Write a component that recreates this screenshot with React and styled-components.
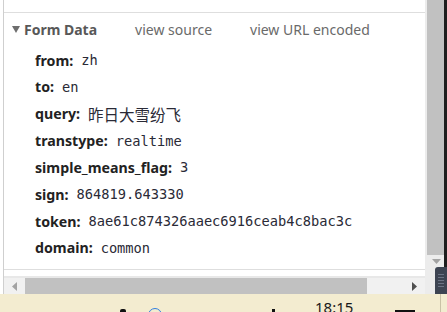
import React from "react";
import styled, { createGlobalStyle } from "styled-components";

const Global = createGlobalStyle`
  html, body { margin: 0; padding: 0; background: #fff; }
  body { width: 447px; height: 312px; overflow: hidden; }
  #root { width: 447px; height: 312px; }
`;

const Page = styled.div`
  display: flex;
  flex-direction: column;
  width: 447px;
  height: 312px;
  overflow: hidden;
`;

const Main = styled.div`
  display: flex;
  height: 294px;
`;

const Panel = styled.div`
  flex: 1;
  display: flex;
  flex-direction: column;
  margin-left: 3px;
  border-left: 1px solid #cfcfcf;
`;

const TopStrip = styled.div`
  height: 12px;
  border-bottom: 1px solid #dedede;
`;

const Section = styled.div`
  flex: 1;
  display: flex;
  flex-direction: column;
`;

const Header = styled.div`
  height: 33.6px;
  display: flex;
  align-items: center;
  padding-left: 8px;
  font-family: "Noto Sans", sans-serif;
  font-size: 14px;
`;

const Triangle = styled.span`
  width: 0;
  height: 0;
  border-left: 4px solid transparent;
  border-right: 4px solid transparent;
  border-top: 7px solid #6e6e6e;
  margin-right: 4px;
`;

const Title = styled.span`
  font-weight: 700;
  color: #585858;
  margin-right: 38px;
`;

const Link = styled.span`
  color: #6a6a6a;
  margin-right: 38px;
`;

const Rows = styled.div`
  display: flex;
  flex-direction: column;
  padding-left: 31px;
`;

const Row = styled.div`
  height: 26.85px;
  display: flex;
  align-items: center;
  white-space: nowrap;
`;

const Label = styled.span`
  font-family: "Noto Sans", sans-serif;
  font-weight: 700;
  font-size: 14.2px;
  color: #222;
  margin-right: 8px;
`;

const Value = styled.span`
  font-family: "DejaVu Sans Mono", "Noto Sans CJK SC", monospace;
  font-size: ${(p) => (p.$cjk ? "15.5px" : "13.7px")};
  color: #2a2a36;
`;

const BottomLine = styled.div`
  height: 6px;
  border-top: 1px solid #dedede;
`;

const HScroll = styled.div`
  height: 18px;
  display: flex;
  align-items: stretch;
  background: #f1f1f1;
  border-top: 2px solid #e8e8e8;
  box-sizing: border-box;
`;

const ArrowBox = styled.div`
  width: ${(p) => p.$w}px;
  display: flex;
  align-items: center;
  justify-content: center;
`;

const HThumb = styled.div`
  width: 342px;
  background: #c1c1c1;
`;

const HTrack = styled.div`
  flex: 1;
`;

const VScroll = styled.div`
  width: 22px;
  display: flex;
  flex-direction: column;
  background: #ececec;
  border-right: 3px solid #1e1e1e;
  box-sizing: border-box;
`;

const VThumb = styled.div`
  height: 255px;
  margin-left: 2px;
  background: #c1c1c1;
`;

const VArrow = styled.div`
  height: 12px;
  display: flex;
  align-items: center;
  justify-content: flex-end;
  padding-right: 3px;
`;

const Grip = styled.div`
  flex: 1;
  margin-left: 10px;
  margin-right: -3px;
  background: #3d4452;
  border-radius: 3px 0 0 0;
  display: flex;
  flex-direction: column;
  justify-content: center;
  gap: 2px;
  padding: 0 3px;
`;

const GripLine = styled.div`
  height: 1px;
  background: #6b7384;
`;

const Taskbar = styled.div`
  height: 18px;
  background: #f3ecd0;
  display: flex;
  align-items: flex-start;
  overflow: hidden;
`;

const TrayBlob = styled.div`
  margin-left: ${(p) => p.$ml}px;
  margin-top: ${(p) => p.$mt}px;
  width: ${(p) => p.$w}px;
  height: ${(p) => p.$h}px;
  background: ${(p) => p.$c || "#111"};
  border-radius: ${(p) => p.$r || 0};
  flex-shrink: 0;
`;

const Ring = styled.div`
  margin-left: ${(p) => p.$ml}px;
  margin-top: 14px;
  width: 14px;
  height: 14px;
  border: 1.5px solid #2f7fe0;
  border-radius: 50%;
  box-sizing: border-box;
  flex-shrink: 0;
`;

const Clock = styled.div`
  margin-left: ${(p) => p.$ml}px;
  margin-top: 6px;
  font-family: "Noto Sans", sans-serif;
  font-size: 15px;
  line-height: 15px;
  color: #1a1a1a;
  flex-shrink: 0;
`;

const Divider = styled.div`
  margin-left: ${(p) => p.$ml}px;
  width: 1px;
  height: 18px;
  background: #c9c2a6;
  flex-shrink: 0;
`;

const fields = [
  ["from", "zh"],
  ["to", "en"],
  ["query", "昨日大雪纷飞", true],
  ["transtype", "realtime"],
  ["simple_means_flag", "3"],
  ["sign", "864819.643330"],
  ["token", "8ae61c874326aaec6916ceab4c8bac3c"],
  ["domain", "common"],
];

export default function App() {
  return (
    <Page>
      <Global />
      <Main>
        <Panel>
          <TopStrip />
          <Section>
            <Header>
              <Triangle />
              <Title>Form Data</Title>
              <Link>view source</Link>
              <Link>view URL encoded</Link>
            </Header>
            <Rows>
              {fields.map(([k, v, cjk]) => (
                <Row key={k}>
                  <Label>{k}:</Label>
                  <Value $cjk={cjk}>{v}</Value>
                </Row>
              ))}
            </Rows>
          </Section>
          <BottomLine />
          <HScroll>
            <ArrowBox $w={21}>
              <svg width="5" height="9" viewBox="0 0 5 9">
                <path d="M5 0 L0 4.5 L5 9 Z" fill="#a3a3a3" />
              </svg>
            </ArrowBox>
            <HThumb />
            <HTrack />
            <ArrowBox $w={22}>
              <svg width="5" height="9" viewBox="0 0 5 9">
                <path d="M0 0 L5 4.5 L0 9 Z" fill="#505050" />
              </svg>
            </ArrowBox>
          </HScroll>
        </Panel>
        <VScroll>
          <VThumb />
          <VArrow>
            <svg width="9" height="5" viewBox="0 0 9 5">
              <path d="M0 0 L9 0 L4.5 5 Z" fill="#a3a3a3" />
            </svg>
          </VArrow>
          <Grip>
            <GripLine />
            <GripLine />
            <GripLine />
            <GripLine />
            <GripLine />
          </Grip>
        </VScroll>
      </Main>
      <Taskbar>
        <TrayBlob $ml={120} $mt={15} $w={6} $h={6} $r="2px" />
        <Ring $ml={22} />
        <TrayBlob $ml={110} $mt={15} $w={3} $h={6} />
        <Clock $ml={40}>18:15</Clock>
        <TrayBlob $ml={42} $mt={16} $w={20} $h={4} />
        <Divider $ml={25} />
      </Taskbar>
    </Page>
  );
}
